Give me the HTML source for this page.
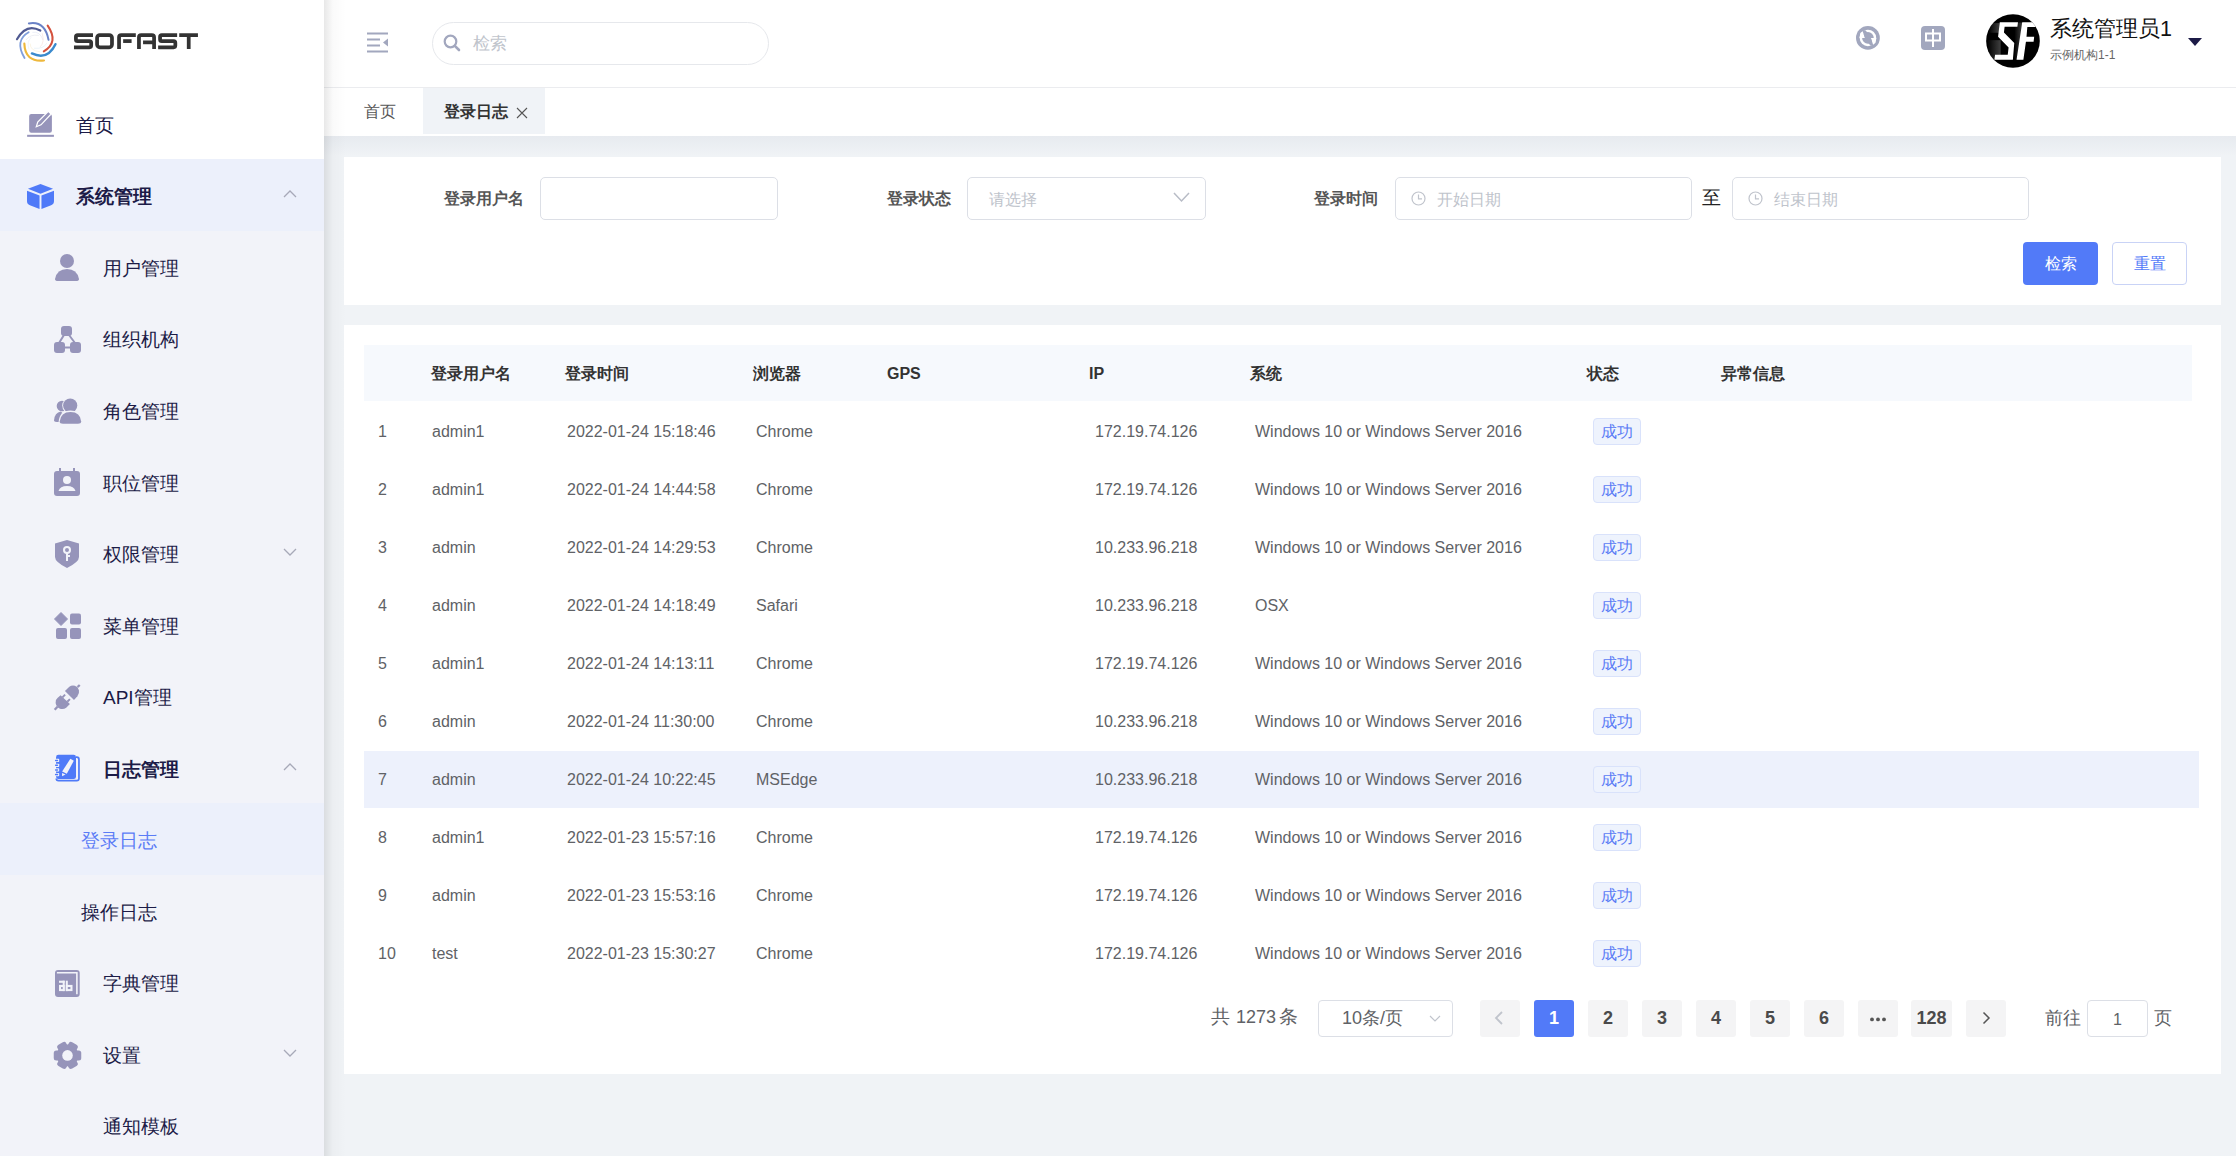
<!DOCTYPE html>
<html><head><meta charset="utf-8">
<style>
*{box-sizing:border-box;margin:0;padding:0}
html,body{width:2236px;height:1156px;overflow:hidden;background:#f0f3f6;font-family:"Liberation Sans",sans-serif;position:relative}
.abs{position:absolute}
.mi{font-size:19px;line-height:72px;white-space:nowrap}
.lbl{font-size:16px;font-weight:bold;color:#555;white-space:nowrap}
.inp{border:1px solid #dcdfe6;border-radius:5px;background:#fff;height:43px}
.ph{color:#c0c4cc;font-size:16px;white-space:nowrap}
.th{font-size:16px;font-weight:bold;color:#333;white-space:nowrap}
.td{font-size:16px;color:#606266;white-space:nowrap}
.tag{width:48px;height:27px;border:1px solid #d9e2fb;background:#eef3fd;border-radius:4px;color:#5b7cf5;font-size:16px;line-height:25px;text-align:center}
.pg{height:37px;width:40px;background:#f4f4f5;border-radius:3px;color:#4a4a4a;font-weight:bold;font-size:18px;line-height:36px;text-align:center}
</style></head><body>
<div class="abs" style="left:324px;top:0;width:1912px;height:88px;background:#fff"></div>
<div class="abs" style="left:324px;top:87px;width:1912px;height:1px;background:#ebecef"></div>
<div class="abs" style="left:324px;top:88px;width:1912px;height:48px;background:#fff"></div>
<div class="abs" style="left:423px;top:88px;width:122px;height:46px;background:#f0f3f7"></div>
<div class="abs" style="left:324px;top:136px;width:1912px;height:20px;background:linear-gradient(180deg,rgba(30,50,90,0.045),rgba(30,50,90,0))"></div>
<div class="abs" style="left:324px;top:0;width:22px;height:1156px;background:linear-gradient(90deg,rgba(0,0,0,0.09),rgba(0,0,0,0.02) 40%,rgba(0,0,0,0))"></div>
<svg class="abs" style="left:366px;top:32px" width="23" height="21" viewBox="0 0 23 21">
<path d="M1,1.5 H22 M1,7.5 H14 M1,13.5 H14 M1,19.5 H22" stroke="#a2a7be" stroke-width="1.8"/>
<path d="M22,6.5 V14.5 L17,10.5Z" fill="#a2a7be"/></svg>
<div class="abs" style="left:432px;top:22px;width:337px;height:43px;border:1px solid #e6e8ec;border-radius:22px;background:#fff"></div>
<svg class="abs" style="left:443px;top:34px" width="18" height="18" viewBox="0 0 18 18">
<circle cx="7.5" cy="7.5" r="5.8" fill="none" stroke="#a2a7be" stroke-width="2.2"/>
<path d="M11.8,11.8 L16,16" stroke="#a2a7be" stroke-width="2.6" stroke-linecap="round"/></svg>
<div class="abs ph" style="left:473px;top:32px;font-size:17px;line-height:24px">检索</div>
<svg class="abs" style="left:1852px;top:22px" width="32" height="32" viewBox="0 0 1156 1156">
<circle cx="575" cy="575" r="430" fill="#a2a7be"/>
<circle cx="575" cy="575" r="298" fill="#fff"/>
<circle cx="575" cy="575" r="210" fill="#a2a7be"/>
<path d="M270,575 L470,575 L385,330 L300,400Z" fill="#fff"/>
<path d="M880,575 L680,575 L765,820 L850,750Z" fill="#fff"/>
<path d="M385,330 L470,290 L560,380 L470,575Z" fill="#a2a7be"/>
<path d="M765,820 L680,860 L590,770 L680,575Z" fill="#a2a7be"/>
</svg>
<svg class="abs" style="left:1921px;top:26px" width="24" height="24" viewBox="0 0 24 24">
<rect x="0" y="0" width="24" height="24" rx="4" fill="#a2a7be"/>
<rect x="5" y="7.5" width="14" height="7" fill="none" stroke="#fff" stroke-width="2"/>
<path d="M12,3 V21" stroke="#fff" stroke-width="2"/></svg>
<svg class="abs" style="left:1986px;top:14px" width="54" height="54" viewBox="105 100 945 950">
<defs><clipPath id="cc"><circle cx="577" cy="575" r="472"/></clipPath></defs>
<circle cx="577" cy="575" r="472" fill="#000"/>
<defs><linearGradient id="sg" x1="0" x2="1"><stop offset="0" stop-color="#fff" stop-opacity="0"/><stop offset="1" stop-color="#fff" stop-opacity="0.25"/></linearGradient></defs>
<g clip-path="url(#cc)"><rect x="150" y="260" width="190" height="170" fill="url(#sg)"/><rect x="130" y="560" width="230" height="340" fill="url(#sg)"/><rect x="600" y="250" width="140" height="650" fill="url(#sg)"/></g>
<g clip-path="url(#cc)" fill="#fff">
<path d="M345,245 L665,245 L655,325 L430,325 L418,425 L600,610 L575,905 L250,905 L262,815 L485,815 L500,690 L315,500Z"/>
<path d="M740,245 L990,245 L980,330 L830,330 L815,500 L950,500 L940,590 L805,590 L760,905 L640,905Z"/>
</g></svg>
<div class="abs" style="left:2050px;top:15px;font-size:21.5px;color:#111;white-space:nowrap;line-height:28px">系统管理员1</div>
<div class="abs" style="left:2050px;top:46px;font-size:12px;color:#666;white-space:nowrap;line-height:18px">示例机构1-1</div>
<svg class="abs" style="left:2187px;top:37px" width="16" height="10" viewBox="0 0 16 10"><path d="M1,1 H15 L8,9Z" fill="#1c1b47"/></svg>
<div class="abs" style="left:364px;top:100px;font-size:16px;color:#555;line-height:24px;white-space:nowrap">首页</div>
<div class="abs" style="left:444px;top:100px;font-size:16px;color:#333;font-weight:bold;line-height:24px;white-space:nowrap">登录日志</div>
<svg class="abs" style="left:516px;top:107px" width="12" height="12" viewBox="0 0 12 12"><path d="M1,1 L11,11 M11,1 L1,11" stroke="#555" stroke-width="1.1"/></svg>
<div class="abs" style="left:344px;top:157px;width:1877px;height:148px;background:#fff"></div>
<div class="abs lbl" style="left:444px;top:187px;line-height:24px">登录用户名</div>
<div class="abs inp" style="left:540px;top:177px;width:238px"></div>
<div class="abs lbl" style="left:887px;top:187px;line-height:24px">登录状态</div>
<div class="abs inp" style="left:967px;top:177px;width:239px"></div>
<div class="abs ph" style="left:989px;top:188px;line-height:24px">请选择</div>
<svg class="abs" style="left:1173px;top:192px" width="17" height="11" viewBox="0 0 17 11"><path d="M1,1 L8.5,9 L16,1" fill="none" stroke="#b8bcc6" stroke-width="1.5"/></svg>
<div class="abs lbl" style="left:1314px;top:187px;line-height:24px">登录时间</div>
<div class="abs inp" style="left:1395px;top:177px;width:297px"></div>
<div class="abs inp" style="left:1732px;top:177px;width:297px"></div>
<svg class="abs" style="left:1411px;top:191px" width="15" height="15" viewBox="0 0 15 15"><circle cx="7.5" cy="7.5" r="6.5" fill="none" stroke="#c0c4cc" stroke-width="1.2"/><path d="M7.5,3.5 V7.8 H11" fill="none" stroke="#c0c4cc" stroke-width="1.2"/></svg>
<svg class="abs" style="left:1748px;top:191px" width="15" height="15" viewBox="0 0 15 15"><circle cx="7.5" cy="7.5" r="6.5" fill="none" stroke="#c0c4cc" stroke-width="1.2"/><path d="M7.5,3.5 V7.8 H11" fill="none" stroke="#c0c4cc" stroke-width="1.2"/></svg>
<div class="abs ph" style="left:1437px;top:188px;line-height:24px">开始日期</div>
<div class="abs ph" style="left:1774px;top:188px;line-height:24px">结束日期</div>
<div class="abs" style="left:1702px;top:186px;font-size:19px;color:#222;line-height:24px">至</div>
<div class="abs" style="left:2023px;top:242px;width:75px;height:43px;background:#527af8;border-radius:4px;color:#fff;font-size:16px;line-height:44px;text-align:center">检索</div>
<div class="abs" style="left:2112px;top:242px;width:75px;height:43px;background:#fff;border:1px solid #c9d3f6;border-radius:4px;color:#527af8;font-size:16px;line-height:42px;text-align:center">重置</div>
<div class="abs" style="left:344px;top:325px;width:1877px;height:749px;background:#fff"></div>
<div class="abs" style="left:364px;top:345px;width:1828px;height:56px;background:#f6f9fd"></div>
<div class="abs" style="left:364px;top:751px;width:1835px;height:57px;background:#edf1fc"></div>
<div class="abs th" style="left:431px;top:362px;line-height:24px">登录用户名</div>
<div class="abs th" style="left:565px;top:362px;line-height:24px">登录时间</div>
<div class="abs th" style="left:753px;top:362px;line-height:24px">浏览器</div>
<div class="abs th" style="left:887px;top:362px;line-height:24px">GPS</div>
<div class="abs th" style="left:1089px;top:362px;line-height:24px">IP</div>
<div class="abs th" style="left:1250px;top:362px;line-height:24px">系统</div>
<div class="abs th" style="left:1587px;top:362px;line-height:24px">状态</div>
<div class="abs th" style="left:1721px;top:362px;line-height:24px">异常信息</div>
<div class="abs td" style="left:378px;top:420px;line-height:24px">1</div>
<div class="abs td" style="left:432px;top:420px;line-height:24px">admin1</div>
<div class="abs td" style="left:567px;top:420px;line-height:24px">2022-01-24 15:18:46</div>
<div class="abs td" style="left:756px;top:420px;line-height:24px">Chrome</div>
<div class="abs td" style="left:1095px;top:420px;line-height:24px">172.19.74.126</div>
<div class="abs td" style="left:1255px;top:420px;line-height:24px">Windows 10 or Windows Server 2016</div>
<div class="abs tag" style="left:1593px;top:418px">成功</div>
<div class="abs td" style="left:378px;top:478px;line-height:24px">2</div>
<div class="abs td" style="left:432px;top:478px;line-height:24px">admin1</div>
<div class="abs td" style="left:567px;top:478px;line-height:24px">2022-01-24 14:44:58</div>
<div class="abs td" style="left:756px;top:478px;line-height:24px">Chrome</div>
<div class="abs td" style="left:1095px;top:478px;line-height:24px">172.19.74.126</div>
<div class="abs td" style="left:1255px;top:478px;line-height:24px">Windows 10 or Windows Server 2016</div>
<div class="abs tag" style="left:1593px;top:476px">成功</div>
<div class="abs td" style="left:378px;top:536px;line-height:24px">3</div>
<div class="abs td" style="left:432px;top:536px;line-height:24px">admin</div>
<div class="abs td" style="left:567px;top:536px;line-height:24px">2022-01-24 14:29:53</div>
<div class="abs td" style="left:756px;top:536px;line-height:24px">Chrome</div>
<div class="abs td" style="left:1095px;top:536px;line-height:24px">10.233.96.218</div>
<div class="abs td" style="left:1255px;top:536px;line-height:24px">Windows 10 or Windows Server 2016</div>
<div class="abs tag" style="left:1593px;top:534px">成功</div>
<div class="abs td" style="left:378px;top:594px;line-height:24px">4</div>
<div class="abs td" style="left:432px;top:594px;line-height:24px">admin</div>
<div class="abs td" style="left:567px;top:594px;line-height:24px">2022-01-24 14:18:49</div>
<div class="abs td" style="left:756px;top:594px;line-height:24px">Safari</div>
<div class="abs td" style="left:1095px;top:594px;line-height:24px">10.233.96.218</div>
<div class="abs td" style="left:1255px;top:594px;line-height:24px">OSX</div>
<div class="abs tag" style="left:1593px;top:592px">成功</div>
<div class="abs td" style="left:378px;top:652px;line-height:24px">5</div>
<div class="abs td" style="left:432px;top:652px;line-height:24px">admin1</div>
<div class="abs td" style="left:567px;top:652px;line-height:24px">2022-01-24 14:13:11</div>
<div class="abs td" style="left:756px;top:652px;line-height:24px">Chrome</div>
<div class="abs td" style="left:1095px;top:652px;line-height:24px">172.19.74.126</div>
<div class="abs td" style="left:1255px;top:652px;line-height:24px">Windows 10 or Windows Server 2016</div>
<div class="abs tag" style="left:1593px;top:650px">成功</div>
<div class="abs td" style="left:378px;top:710px;line-height:24px">6</div>
<div class="abs td" style="left:432px;top:710px;line-height:24px">admin</div>
<div class="abs td" style="left:567px;top:710px;line-height:24px">2022-01-24 11:30:00</div>
<div class="abs td" style="left:756px;top:710px;line-height:24px">Chrome</div>
<div class="abs td" style="left:1095px;top:710px;line-height:24px">10.233.96.218</div>
<div class="abs td" style="left:1255px;top:710px;line-height:24px">Windows 10 or Windows Server 2016</div>
<div class="abs tag" style="left:1593px;top:708px">成功</div>
<div class="abs td" style="left:378px;top:768px;line-height:24px">7</div>
<div class="abs td" style="left:432px;top:768px;line-height:24px">admin</div>
<div class="abs td" style="left:567px;top:768px;line-height:24px">2022-01-24 10:22:45</div>
<div class="abs td" style="left:756px;top:768px;line-height:24px">MSEdge</div>
<div class="abs td" style="left:1095px;top:768px;line-height:24px">10.233.96.218</div>
<div class="abs td" style="left:1255px;top:768px;line-height:24px">Windows 10 or Windows Server 2016</div>
<div class="abs tag" style="left:1593px;top:766px">成功</div>
<div class="abs td" style="left:378px;top:826px;line-height:24px">8</div>
<div class="abs td" style="left:432px;top:826px;line-height:24px">admin1</div>
<div class="abs td" style="left:567px;top:826px;line-height:24px">2022-01-23 15:57:16</div>
<div class="abs td" style="left:756px;top:826px;line-height:24px">Chrome</div>
<div class="abs td" style="left:1095px;top:826px;line-height:24px">172.19.74.126</div>
<div class="abs td" style="left:1255px;top:826px;line-height:24px">Windows 10 or Windows Server 2016</div>
<div class="abs tag" style="left:1593px;top:824px">成功</div>
<div class="abs td" style="left:378px;top:884px;line-height:24px">9</div>
<div class="abs td" style="left:432px;top:884px;line-height:24px">admin</div>
<div class="abs td" style="left:567px;top:884px;line-height:24px">2022-01-23 15:53:16</div>
<div class="abs td" style="left:756px;top:884px;line-height:24px">Chrome</div>
<div class="abs td" style="left:1095px;top:884px;line-height:24px">172.19.74.126</div>
<div class="abs td" style="left:1255px;top:884px;line-height:24px">Windows 10 or Windows Server 2016</div>
<div class="abs tag" style="left:1593px;top:882px">成功</div>
<div class="abs td" style="left:378px;top:942px;line-height:24px">10</div>
<div class="abs td" style="left:432px;top:942px;line-height:24px">test</div>
<div class="abs td" style="left:567px;top:942px;line-height:24px">2022-01-23 15:30:27</div>
<div class="abs td" style="left:756px;top:942px;line-height:24px">Chrome</div>
<div class="abs td" style="left:1095px;top:942px;line-height:24px">172.19.74.126</div>
<div class="abs td" style="left:1255px;top:942px;line-height:24px">Windows 10 or Windows Server 2016</div>
<div class="abs tag" style="left:1593px;top:940px">成功</div>
<div class="abs" style="left:1211px;top:1005px;font-size:18.5px;color:#606266;line-height:24px">共</div>
<div class="abs" style="left:1236px;top:1005px;font-size:18px;color:#606266;line-height:24px">1273</div>
<div class="abs" style="left:1279px;top:1005px;font-size:18.5px;color:#606266;line-height:24px">条</div>
<div class="abs inp" style="left:1318px;top:1000px;width:135px;height:37px;border-radius:4px"></div>
<div class="abs" style="left:1342px;top:1006px;font-size:18px;color:#606266;line-height:24px;white-space:nowrap">10条/页</div>
<svg class="abs" style="left:1429px;top:1015px" width="12" height="8" viewBox="0 0 12 8"><path d="M1,1 L6,6 L11,1" fill="none" stroke="#c0c4cc" stroke-width="1.2"/></svg>
<div class="abs pg" style="left:1480px;top:1000px"></div>
<svg class="abs" style="left:1494px;top:1010px" width="10" height="16" viewBox="0 0 10 16"><path d="M8,2 L2,8 L8,14" fill="none" stroke="#c0c4cc" stroke-width="1.8"/></svg>
<div class="abs pg" style="left:1534px;top:1000px;width:40px;background:#527af8;color:#fff">1</div>
<div class="abs pg" style="left:1588px;top:1000px;width:40px">2</div>
<div class="abs pg" style="left:1642px;top:1000px;width:40px">3</div>
<div class="abs pg" style="left:1696px;top:1000px;width:40px">4</div>
<div class="abs pg" style="left:1750px;top:1000px;width:40px">5</div>
<div class="abs pg" style="left:1804px;top:1000px;width:40px">6</div>
<div class="abs pg" style="left:1858px;top:1000px;width:40px"></div>
<svg class="abs" style="left:1869px;top:1016px" width="18" height="7" viewBox="0 0 18 7"><circle cx="3" cy="3.4" r="1.9" fill="#555"/><circle cx="9" cy="3.4" r="1.9" fill="#555"/><circle cx="15" cy="3.4" r="1.9" fill="#555"/></svg>
<div class="abs pg" style="left:1911px;top:1000px;width:41px">128</div>
<div class="abs pg" style="left:1966px;top:1000px"></div>
<svg class="abs" style="left:1981px;top:1010px" width="10" height="16" viewBox="0 0 10 16"><path d="M2.5,2.5 L8,8 L2.5,13.5" fill="none" stroke="#555" stroke-width="1.5"/></svg>
<div class="abs" style="left:2045px;top:1006px;font-size:18px;color:#606266;line-height:24px;white-space:nowrap">前往</div>
<div class="abs inp" style="left:2087px;top:1000px;width:61px;height:37px;border-radius:4px;text-align:center;font-size:16px;line-height:37px;color:#606266">1</div>
<div class="abs" style="left:2154px;top:1006px;font-size:18px;color:#606266;line-height:24px;white-space:nowrap">页</div>
<div class="abs" style="left:0;top:0;width:324px;height:1156px;background:#f2f3f9"></div>
<div class="abs" style="left:0;top:0;width:324px;height:159px;background:#fff"></div>
<div class="abs" style="left:0;top:159px;width:324px;height:72px;background:#ecf0fb"></div>
<div class="abs" style="left:0;top:803px;width:324px;height:72px;background:#ecf0fb"></div>
<svg class="abs" style="left:12px;top:18px" width="50" height="50" viewBox="0 0 1156 1156" fill="none" stroke-linecap="round">
<path d="M390,125 Q760,60 845,505" stroke="#6a82c6" stroke-width="46"/>
<path d="M115,490 Q330,110 655,290" stroke="#505a92" stroke-width="50"/>
<path d="M825,175 Q1090,560 735,770" stroke="#d4513d" stroke-width="48"/>
<path d="M385,330 Q50,520 290,925" stroke="#809fdc" stroke-width="42"/>
<path d="M285,590 Q300,1030 740,982" stroke="#eeb83c" stroke-width="50"/>
<path d="M460,820 Q820,990 1005,605" stroke="#3b8acd" stroke-width="56"/>
<path d="M480,330 Q640,300 715,500" stroke="#dfe5f4" stroke-width="14"/>
<path d="M700,360 Q760,560 660,660" stroke="#f3d8d4" stroke-width="12"/>
<path d="M520,700 Q730,720 800,590" stroke="#d8e8f4" stroke-width="12"/>
<path d="M420,600 Q420,760 640,780" stroke="#f6e9cc" stroke-width="12"/>
<path d="M330,500 Q420,370 610,400" stroke="#dcdde8" stroke-width="12"/>
<path d="M390,720 Q330,560 440,450" stroke="#e4eaf6" stroke-width="12"/>
</svg>
<svg class="abs" style="left:70px;top:28px" width="135" height="26" viewBox="0 0 2236 431" fill="none" stroke="#333" stroke-width="62">
<path d="M380,118 H125 Q97,118 97,146 V189 Q97,217 125,217 H322 Q350,217 350,245 V292 Q350,320 322,320 H65"/>
<rect x="448" y="118" width="247" height="202" rx="45"/>
<path d="M812,350 V155 Q812,118 850,118 H1090"/>
<path d="M880,217 H1020"/>
<path d="M1142,350 V155 Q1142,118 1180,118 H1355 Q1393,118 1393,155 V350"/>
<path d="M1210,238 H1393"/>
<path d="M1775,118 H1520 Q1492,118 1492,146 V189 Q1492,217 1520,217 H1717 Q1745,217 1745,245 V292 Q1745,320 1717,320 H1460"/>
<path d="M1810,118 H2120 M1967,118 V350"/>
</svg>
<div class="abs mi" style="left:76px;top:90px;color:#1c1b47;font-weight:normal">首页</div>
<svg class="abs" style="left:22px;top:106px" width="36" height="36" viewBox="0 0 1156 1156">
<rect x="230" y="255" width="730" height="600" rx="70" fill="#9694ba"/>
<path d="M845,170 L935,258 L610,605 L460,665 L505,515 Z" fill="#9694ba" stroke="#fff" stroke-width="40" stroke-linejoin="miter"/>
<rect x="165" y="925" width="860" height="65" fill="#9694ba"/></svg>
<div class="abs mi" style="left:76px;top:161px;color:#1c1b47;font-weight:bold">系统管理</div>
<svg class="abs" style="left:27px;top:184px" width="27" height="26" viewBox="0 0 28 27" preserveAspectRatio="none">
<path d="M14,0 L27,5 L14,10 L1,5Z" fill="#4f7af8"/>
<path d="M0,7 L13,12 V26 L3,22 Q0,21 0,18Z" fill="#4f7af8"/>
<path d="M28,7 L15,12 V26 L25,22 Q28,21 28,18Z" fill="#4f7af8"/></svg>
<svg class="abs" style="left:283px;top:190px" width="14" height="8" viewBox="0 0 14 8"><path d="M1,7 L7,1 L13,7" fill="none" stroke="#a7a9b8" stroke-width="1.3"/></svg>
<div class="abs mi" style="left:103px;top:233px;color:#1c1b47;font-weight:normal">用户管理</div>
<svg class="abs" style="left:54px;top:254px" width="28" height="28" viewBox="0 0 28 28">
<circle cx="13" cy="7" r="7" fill="#9694ba"/>
<path d="M1,25 Q3,15 13,15 Q23,15 25,25 Q25,27 22,27 H4 Q1,27 1,25Z" fill="#9694ba"/></svg>
<div class="abs mi" style="left:103px;top:304px;color:#1c1b47;font-weight:normal">组织机构</div>
<svg class="abs" style="left:53px;top:325px" width="29" height="29" viewBox="0 0 29 29">
<rect x="8" y="1" width="11" height="10" rx="3" fill="#9694ba"/>
<rect x="1" y="17" width="11" height="11" rx="3" fill="#9694ba"/>
<rect x="17" y="17" width="11" height="11" rx="3" fill="#9694ba"/>
<path d="M11,10 L6,18 M16,10 L22,18 M10,22.5 H19" stroke="#9694ba" stroke-width="2" fill="none"/></svg>
<div class="abs mi" style="left:103px;top:376px;color:#1c1b47;font-weight:normal">角色管理</div>
<svg class="abs" style="left:53px;top:397px" width="29" height="28" viewBox="0 0 29 28">
<circle cx="9" cy="9" r="5.3" fill="#9694ba"/>
<path d="M1,23.5 Q1.5,15.5 8,14.5 L11,18 L9,25 Q1,25.5 1,23.5Z" fill="#9694ba"/>
<circle cx="17.2" cy="8.6" r="8" fill="#f2f3f9"/>
<circle cx="17.2" cy="8.6" r="7.1" fill="#9694ba"/>
<path d="M5.6,25 Q6.5,13.6 17.5,13.6 Q28.6,13.6 29.4,25 Q29,28 25,28 H10 Q5.6,28 5.6,25Z" fill="#f2f3f9"/>
<path d="M6.7,24.6 Q7.6,15 17.5,15 Q27.4,15 28.2,24.6 Q28,26.8 25,26.8 H10 Q6.7,26.8 6.7,24.6Z" fill="#9694ba"/></svg>
<div class="abs mi" style="left:103px;top:448px;color:#1c1b47;font-weight:normal">职位管理</div>
<svg class="abs" style="left:54px;top:468px" width="26" height="28" viewBox="0 0 26 28">
<rect x="5" y="0" width="2" height="4" fill="#9694ba"/><rect x="19" y="0" width="2" height="4" fill="#9694ba"/>
<rect x="0" y="3" width="26" height="25" rx="3" fill="#9694ba"/>
<circle cx="13" cy="12" r="4" fill="#f2f3f9"/>
<path d="M4.5,23 Q6,18 13,18 Q20,18 21.5,23Z" fill="#f2f3f9"/></svg>
<div class="abs mi" style="left:103px;top:519px;color:#1c1b47;font-weight:normal">权限管理</div>
<svg class="abs" style="left:54px;top:540px" width="26" height="28" viewBox="0 0 26 28">
<path d="M13,0 L25,3.5 V17 Q25,22 13,28 Q1,22 1,17 V3.5Z" fill="#9694ba"/>
<circle cx="13" cy="10" r="3" fill="none" stroke="#f2f3f9" stroke-width="2"/>
<path d="M13,13 V21 M13,16 H16" stroke="#f2f3f9" stroke-width="2"/></svg>
<svg class="abs" style="left:283px;top:548px" width="14" height="8" viewBox="0 0 14 8"><path d="M1,1 L7,7 L13,1" fill="none" stroke="#a7a9b8" stroke-width="1.3"/></svg>
<div class="abs mi" style="left:103px;top:591px;color:#1c1b47;font-weight:normal">菜单管理</div>
<svg class="abs" style="left:54px;top:612px" width="28" height="28" viewBox="0 0 28 28">
<path d="M7,0.5 L13.5,7 L7,13.5 L0.5,7Z" fill="#9694ba" stroke="#9694ba" stroke-width="1" stroke-linejoin="round"/>
<rect x="16" y="1.5" width="11" height="11" rx="2" fill="#9694ba"/>
<rect x="2" y="16" width="11" height="11" rx="2" fill="#9694ba"/>
<rect x="16" y="16" width="11" height="11" rx="2" fill="#9694ba"/></svg>
<div class="abs mi" style="left:103px;top:662px;color:#1c1b47;font-weight:normal">API管理</div>
<svg class="abs" style="left:50px;top:680px" width="36" height="36" viewBox="0 0 1156 1156">
<path d="M480,355 L620,215 Q700,160 800,185 Q900,215 930,330 Q950,430 880,520 L770,640 Z" fill="#9694ba"/>
<path d="M885,225 L955,160" stroke="#9694ba" stroke-width="75"/>
<path d="M340,490 L640,770 L520,890 Q430,960 320,920 Q200,870 180,740 Q170,630 240,580 Z" fill="#9694ba"/>
<path d="M240,860 L150,955" stroke="#9694ba" stroke-width="75"/>
<path d="M400,560 L485,470 M555,700 L640,615" stroke="#9694ba" stroke-width="62"/></svg>
<div class="abs mi" style="left:103px;top:734px;color:#1c1b47;font-weight:bold">日志管理</div>
<svg class="abs" style="left:50px;top:750px" width="36" height="36" viewBox="0 0 1156 1156">
<path d="M835,232 H860 Q930,232 930,310 V915 Q930,985 860,985 H275 Q202,985 202,915" fill="none" stroke="#4f7af8" stroke-width="55"/>
<rect x="195" y="155" width="640" height="780" rx="75" fill="#4f7af8"/>
<rect x="188" y="283" width="107" height="104" rx="22" fill="#f2f3f9"/><rect x="158" y="311" width="105" height="48" rx="22" fill="#4f7af8"/><rect x="188" y="438" width="107" height="104" rx="22" fill="#f2f3f9"/><rect x="158" y="466" width="105" height="48" rx="22" fill="#4f7af8"/><rect x="188" y="588" width="107" height="104" rx="22" fill="#f2f3f9"/><rect x="158" y="616" width="105" height="48" rx="22" fill="#4f7af8"/><rect x="188" y="738" width="107" height="104" rx="22" fill="#f2f3f9"/><rect x="158" y="766" width="105" height="48" rx="22" fill="#4f7af8"/>
<path d="M655,280 L765,345 L540,760 L390,690Z" fill="#f2f3f9"/>
<path d="M385,735 L500,790 L390,845Z" fill="#f2f3f9"/></svg>
<svg class="abs" style="left:283px;top:763px" width="14" height="8" viewBox="0 0 14 8"><path d="M1,7 L7,1 L13,7" fill="none" stroke="#a7a9b8" stroke-width="1.3"/></svg>
<div class="abs mi" style="left:81px;top:805px;color:#5b7cf6;font-weight:normal">登录日志</div>
<div class="abs mi" style="left:81px;top:877px;color:#1c1b47;font-weight:normal">操作日志</div>
<div class="abs mi" style="left:103px;top:948px;color:#1c1b47;font-weight:normal">字典管理</div>
<svg class="abs" style="left:54px;top:969px" width="27" height="29" viewBox="0 0 27 29">
<rect x="1" y="1" width="24.7" height="27" rx="3" fill="#9694ba"/>
<path d="M2.9,3.7 H22.9 V25.2" fill="none" stroke="#f2f3f9" stroke-width="1.6"/>
<g fill="#f2f3f9"><rect x="5" y="11.7" width="5.7" height="2.1"/><rect x="8.7" y="11.7" width="2" height="10.4"/><rect x="5" y="15.9" width="5.7" height="6.2"/>
<rect x="11.8" y="11.7" width="2" height="10.4"/><rect x="11.8" y="15.9" width="6.7" height="6.2"/></g>
<g fill="#9694ba"><rect x="7.1" y="18" width="1.6" height="2.1"/><rect x="13.8" y="18" width="2.6" height="2.1"/></g></svg>
<div class="abs mi" style="left:103px;top:1020px;color:#1c1b47;font-weight:normal">设置</div>
<svg class="abs" style="left:53px;top:1041px" width="29" height="29" viewBox="0 0 29 29">
<g fill="#9694ba" transform="translate(14.5 14.4)">
<circle r="10.8"/>
<rect x="-13.75" y="-5" width="27.5" height="10" rx="2.5"/>
<rect x="-13.75" y="-5" width="27.5" height="10" rx="2.5" transform="rotate(60)"/>
<rect x="-13.75" y="-5" width="27.5" height="10" rx="2.5" transform="rotate(120)"/>
</g><circle cx="14.5" cy="14.4" r="5.3" fill="#f2f3f9"/></svg>
<svg class="abs" style="left:283px;top:1049px" width="14" height="8" viewBox="0 0 14 8"><path d="M1,1 L7,7 L13,1" fill="none" stroke="#a7a9b8" stroke-width="1.3"/></svg>
<div class="abs mi" style="left:103px;top:1091px;color:#1c1b47;font-weight:normal">通知模板</div>
</body></html>
